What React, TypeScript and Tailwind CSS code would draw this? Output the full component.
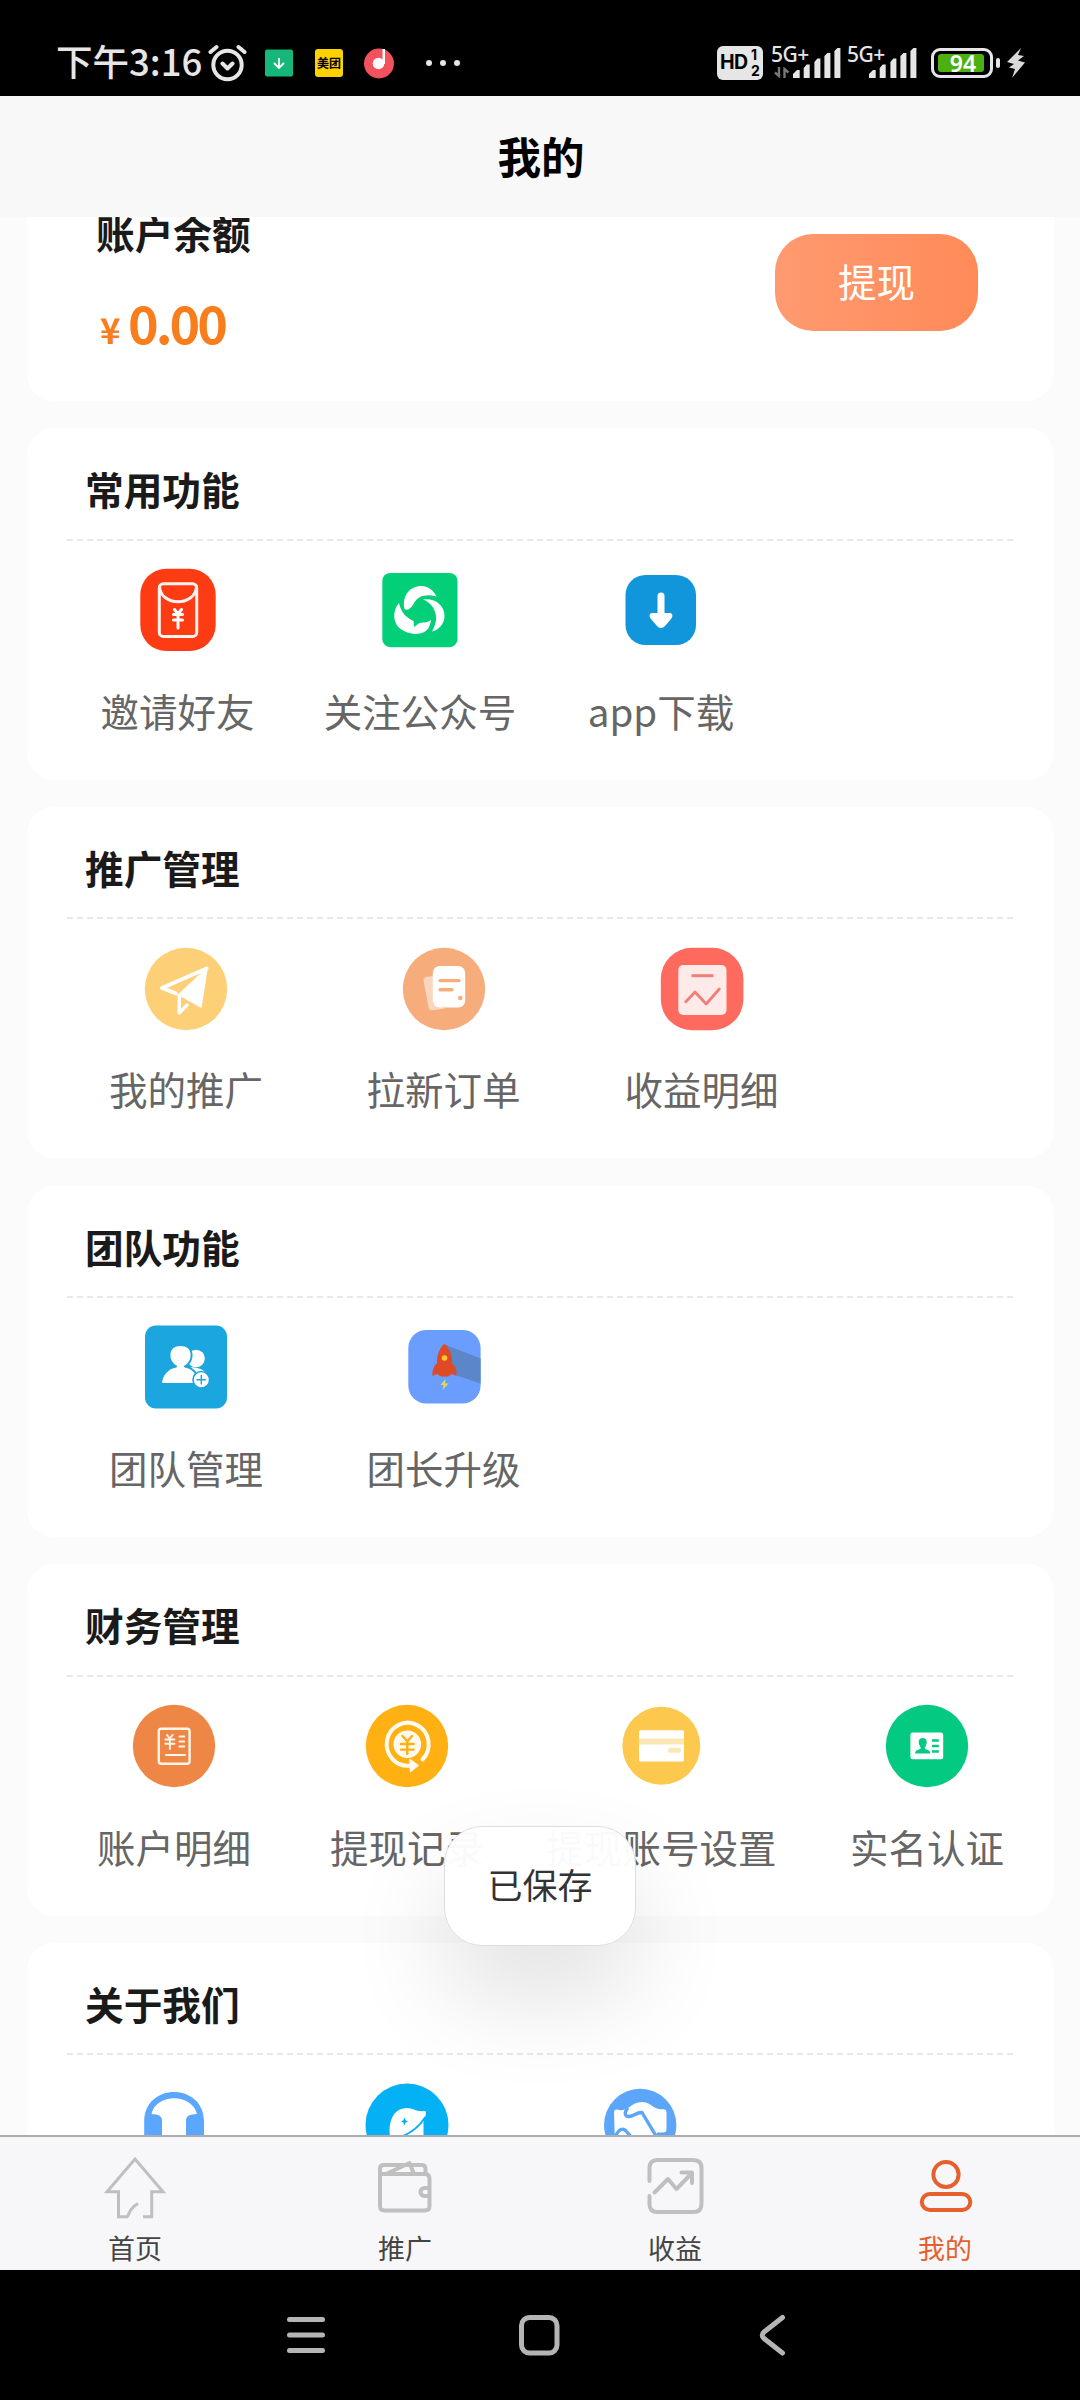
import type { ReactNode } from 'react';

interface MenuItem {
  label: string;
  icon: ReactNode;
  width: string;
}

interface Section {
  title: string;
  items: MenuItem[];
}

function Icon({ children }: { children: ReactNode }) {
  return (
    <svg className="h-[84px] w-[84px] shrink-0" viewBox="0 0 84 84" fill="none" strokeLinecap="round" strokeLinejoin="round">
      {children}
    </svg>
  );
}

const inviteIcon = (
  <Icon>
    <rect x="4.3" y="0.7" width="75.4" height="82.4" rx="26" fill="#fe3c14" />
    <rect x="23.3" y="15.8" width="37.4" height="52.6" rx="4" stroke="#fff3ef" strokeWidth="3" />
    <path d="M23.5 18C24 39 60 39 60.5 18" stroke="#fff3ef" strokeWidth="3" />
    <path d="M38.5 41.5L42 46L45.5 41.5M37.5 46.5h9M37.5 52h9M42 46v14" stroke="#fff" strokeWidth="3" />
  </Icon>
);

const followIcon = (
  <Icon>
    <rect x="4.3" y="5" width="75.2" height="74.2" rx="8" fill="#03cf79" />
    <g fill="#fff">
      <path d="M26.5 41C23.5 27 33 18 43 18C50 18.2 55.5 22 58.5 28.5C48 25.5 40 28 36 35C33.5 40 30 43 26.5 41Z" />
      <path d="M45 31.5C58 30 66.5 38 66.5 48C66.5 56 60 62.5 54 63.5C57 58 58.7 53 58 48C57 40 52 34 45 31.5Z" />
      <path d="M21 35C14 43 15 55 22 60.5C31 68 47 68 51 59C52 56.5 53 54 53 52C49 55.5 44 54 41 55.3L36 59L35.5 53C29 50 23 45 21 35Z" />
    </g>
  </Icon>
);

const downloadIcon = (
  <Icon>
    <rect x="6.5" y="7" width="70.5" height="70" rx="20" fill="#1296db" />
    <path d="M42 28v20" stroke="#fff" strokeWidth="7" />
    <path d="M33 45h18c3 0 3 4 1 6l-6 7c-2.5 2.5-5.5 2.5-8 0l-6-7c-2-2-2-6 1-6z" fill="#fff" />
  </Icon>
);

const promoteIcon = (
  <Icon>
    <circle cx="42" cy="42" r="41.2" fill="#fdd077" />
    <path d="M32 46.5L18 41L62.5 21.5" stroke="#fff" strokeWidth="4" />
    <path d="M63 21L57 60L35 47.5Z" fill="#fff" stroke="#fff" strokeWidth="1.5" />
    <path d="M35.2 48.5V66L43 58" stroke="#fff" strokeWidth="3.4" />
  </Icon>
);

const orderIcon = (
  <Icon>
    <circle cx="42" cy="42" r="41.2" fill="#f7ac7c" />
    <path d="M31 29L24 30Q21 31 21.6 34L26.5 60Q27 63.5 30 63.3L43 61.5L31 57Z" fill="#fff" opacity="0.5" />
    <rect x="30.8" y="19" width="32.4" height="41.5" rx="7" fill="#fff" />
    <path d="M38 33.6h19M38 42.8h12" stroke="#f7ac7c" strokeWidth="3.4" />
    <circle cx="58.3" cy="51" r="2.3" fill="#f7ac7c" />
  </Icon>
);

const incomeIcon = (
  <Icon>
    <rect x="0.8" y="0.8" width="82.6" height="82.4" rx="31" fill="#fe6b5e" />
    <rect x="18.3" y="18" width="48.2" height="50" rx="5" fill="#feeae9" />
    <path d="M31.5 28.7h22" stroke="#f07f78" strokeWidth="3" strokeLinecap="butt" />
    <path d="M25.8 54.8L35 45L46.2 57L59.3 42" stroke="#f07f78" strokeWidth="2.8" />
  </Icon>
);

const teamIcon = (
  <Icon>
    <rect x="1" y="0.5" width="82" height="83" rx="11" fill="#1ba6df" />
    <circle cx="52" cy="33.5" r="8.8" fill="#fff" />
    <path d="M47 42Q62 43 63.5 52H50Z" fill="#fff" />
    <path d="M17 59C17.5 49 24 43 32 41.5C23 37 22 20 36.5 20C51 20 50 37 41 41.5C49 43 54 48 56 59Z" fill="#fff" stroke="#1ba6df" strokeWidth="2" />
    <circle cx="57.3" cy="54.8" r="8.3" fill="#fff" stroke="#1ba6df" strokeWidth="1.6" />
    <path d="M53 54.8h8.6M57.3 50.5v8.6" stroke="#1ba6df" strokeWidth="1.4" />
  </Icon>
);

const rocketIcon = (
  <Icon>
    <rect x="6.3" y="5" width="72.3" height="73.5" rx="18" fill="#6b9dff" />
    <path d="M44 20L78.6 33.5V58.5L53 50Z" fill="#5b87c9" />
    <path d="M42.5 19C47 22 50.3 30 50 38C53 41 55 45 54.5 51L50 49L46 51.5H39L35 49L30.5 51C30 45 32 41 35 38C34.7 30 38 22 42.5 19Z" fill="#df4a26" />
    <circle cx="42.5" cy="33" r="2.8" fill="#fdc62f" />
    <path d="M43.5 54L38.5 60H41.5L40.5 65L46.5 58.5H43Z" fill="#dddc55" />
  </Icon>
);

const accountIcon = (
  <Icon>
    <circle cx="42" cy="42" r="41.2" fill="#ee8746" />
    <rect x="26.8" y="24.8" width="30.8" height="35" rx="2.5" stroke="#fff6e8" strokeWidth="2.4" />
    <path d="M35 31l2.8 3.5L40.6 31M33.4 35.5h9M33.4 39.800h9M37.9 35v10M47.5 32.5h4.7M47.5 37.5h4.7M47.5 42.5h4.7M34 51h19" stroke="#fff6e8" strokeWidth="2" />
  </Icon>
);

const recordIcon = (
  <Icon>
    <circle cx="42" cy="42" r="41.2" fill="#ffb012" />
    <path d="M57.5 55.5A21 21.5 0 1 0 46 61.5" stroke="#fffaf0" strokeWidth="4" />
    <path d="M45 55.5L53 61.5L45.5 67.5Z" fill="#fffaf0" stroke="#fffaf0" strokeWidth="1.5" />
    <circle cx="42.3" cy="40.3" r="13.8" fill="#fffaf0" />
    <path d="M37.5 32L42.3 37.5L47 32M36 40h12.6M36 45.6h12.6M42.3 38v12" stroke="#ffb012" strokeWidth="2.4" />
  </Icon>
);

const cardIcon = (
  <Icon>
    <circle cx="42.3" cy="41.8" r="39" fill="#fcc84e" />
    <rect x="20" y="26.2" width="45" height="31.3" rx="1.5" fill="#fff" />
    <path d="M20 34.5h45v6H20z" fill="#fbe6b5" />
    <rect x="49" y="43.8" width="13" height="5" rx="2.5" fill="#fbe6b5" />
  </Icon>
);

const verifyIcon = (
  <Icon>
    <circle cx="42" cy="42" r="41.2" fill="#03c981" />
    <rect x="25.4" y="28.5" width="32.8" height="26.8" rx="2.5" fill="#fff" />
    <path d="M37.7 34C41.5 34 42.2 37 41.5 40Q40.5 43 39.5 44Q40 45 44 46.5Q45.5 47.5 45.3 49.5H30Q30 47.5 31.5 46.5Q35.5 45 36 44Q35 43 34 40C33.3 37 34 34 37.7 34Z" fill="#03c981" />
    <path d="M47 36.5h6.8M47 42h6.8M47 47.5h6.8" stroke="#03c981" strokeWidth="2.7" strokeLinecap="butt" />
  </Icon>
);

const serviceIcon = (
  <Icon>
    <path d="M12.2 45V38.5C12.2 -1 72 -1 72 38.5V60H54V37Q54 31 65 31C60 10 24 10 19.5 31Q30 31 30 37V60H12.2Z" fill="#5ba6fe" />
  </Icon>
);

const aboutIcon = (
  <Icon>
    <circle cx="42" cy="42" r="41.5" fill="#04b1f4" />
    <path d="M24.8 52C23 35 31 25 41.5 25C49 25 50 29 60.5 28Q62 32 58.5 37V60H27Z" fill="#fff" />
    <path d="M60 34.5Q52 47 38 53" stroke="#04b1f4" strokeWidth="1.8" />
    <path d="M39.5 34.5L40.7 37.2L43 38.4L40.7 39.6L39.5 42.4L38.3 39.6L36 38.4L38.3 37.2Z" fill="#04b1f4" />
  </Icon>
);

const cooperateIcon = (
  <Icon>
    <circle cx="42.2" cy="42" r="36.2" fill="#5ba6f9" />
    <path d="M16 29Q16 26 19 26.5C24 28 26 27 30 25C38 18 46 17 53 22C58 26 62 26.5 66 26.3Q68.5 26.5 68.5 29V46Q68.5 49.5 65 49.5H59V62H17Z" fill="#fff" />
    <path d="M29 26Q25 32 30 33.5C36 34 38 29 44 29.5L57.5 52M18 52Q23 43 28 48L35 56" stroke="#5ba6f9" strokeWidth="3.4" />
  </Icon>
);

const sections: Section[] = [
  {
    title: '常用功能',
    items: [
      { label: '邀请好友', icon: inviteIcon, width: 'w-[221px]' },
      { label: '关注公众号', icon: followIcon, width: 'w-[264px]' },
      { label: 'app下载', icon: downloadIcon, width: 'w-[218px]' },
    ],
  },
  {
    title: '推广管理',
    items: [
      { label: '我的推广', icon: promoteIcon, width: 'w-[238px]' },
      { label: '拉新订单', icon: orderIcon, width: 'w-[277px]' },
      { label: '收益明细', icon: incomeIcon, width: 'w-[239px]' },
    ],
  },
  {
    title: '团队功能',
    items: [
      { label: '团队管理', icon: teamIcon, width: 'w-[238px]' },
      { label: '团长升级', icon: rocketIcon, width: 'w-[277px]' },
    ],
  },
  {
    title: '财务管理',
    items: [
      { label: '账户明细', icon: accountIcon, width: 'w-[214px]' },
      { label: '提现记录', icon: recordIcon, width: 'w-[252px]' },
      { label: '提现账号设置', icon: cardIcon, width: 'w-[256px]' },
      { label: '实名认证', icon: verifyIcon, width: 'w-[276px]' },
    ],
  },
  {
    title: '关于我们',
    items: [
      { label: '', icon: serviceIcon, width: 'w-[214px]' },
      { label: '', icon: aboutIcon, width: 'w-[252px]' },
      { label: '', icon: cooperateIcon, width: 'w-[214px]' },
    ],
  },
];

function Signal() {
  return (
    <svg className="h-[30px] w-[48px] shrink-0" viewBox="0 0 48 30" fill="#e6e6e6">
      <path d="M0 30v-4l4-4h2.700v8zM10.700 30V20l3-3.500h3V30zM21.400 30V14l3-3.500h3V30zM31.400 30V8l3-3h3v25zM41.400 30V3l3-3h3v30z" />
    </svg>
  );
}

function NetworkLabel({ active = false }: { active?: boolean }) {
  return (
    <span className={`${active ? 'ml-[8px]' : 'ml-[6px]'} flex h-[34px] w-[22px] shrink-0 flex-col font-['Noto_Sans',sans-serif] text-[21px] leading-[16px] font-medium tracking-[-0.5px]`}>
      <span>5G+</span>
      {active && (
        <svg className="mt-[5px] ml-[3px] h-[11px] w-4 shrink-0" viewBox="0 0 16 11" fill="none" stroke="#777" strokeWidth="2.4">
          <path d="M5 0v9L1 5.5M10.5 11V2l4 3.5" />
        </svg>
      )}
    </span>
  );
}

function StatusBar() {
  return (
    <div className="flex h-24 shrink-0 items-center bg-black pt-[30px] pl-[56px] text-[#e6e6e6]">
      <span className="mt-[-4px] w-[152px] shrink-0 text-[36.5px] leading-[60px] font-medium whitespace-nowrap">下午3:16</span>
      <svg className="h-[38px] w-[40px] shrink-0" viewBox="0 0 40 38" fill="none" stroke="#e6e6e6" strokeWidth="4" strokeLinecap="round">
        <circle cx="19.5" cy="21" r="14.2" />
        <path d="M14.5 19.5l5 5 5-5M2.5 8L8.5 3M36.5 8L30.5 3" strokeLinejoin="round" />
      </svg>
      <svg className="ml-[17px] h-7 w-7 shrink-0" viewBox="0 0 28 28" fill="none">
        <rect width="28" height="27" y="0.5" rx="2" fill="#15b879" />
        <path d="M14 9v9.5M9 14l5 5 5-5" stroke="#fff" strokeWidth="1.8" />
      </svg>
      <span className="ml-[22px] flex h-7 w-7 shrink-0 items-center justify-center rounded-[3px] bg-[#fed100] text-[12px] font-bold whitespace-nowrap text-black">美团</span>
      <svg className="ml-[21px] h-[31px] w-[30px] shrink-0" viewBox="0 0 30 31">
        <circle cx="15" cy="15.5" r="15" fill="#f1525d" />
        <circle cx="14.5" cy="15.5" r="5.8" fill="#fff" />
        <path d="M18.5 1h2.5v15h-2.5z" fill="#fff" />
      </svg>
      <span className="ml-8 flex gap-2">
        <i className="h-1.5 w-1.5 rounded-full bg-[#e6e6e6]" />
        <i className="h-1.5 w-1.5 rounded-full bg-[#e6e6e6]" />
        <i className="h-1.5 w-1.5 rounded-full bg-[#e6e6e6]" />
      </span>
      <span className="ml-[257px] flex h-[34px] w-[46px] shrink-0 items-center rounded-md bg-[#e6e6e6] pl-[3px] font-['Inter',sans-serif] text-black">
        <b className="w-[29px] text-[19.5px] tracking-[-0.5px]">HD</b>
        <span className="flex flex-col pl-[2px] text-[14px] leading-[16px] font-bold">
          <span>1</span>
          <span>2</span>
        </span>
      </span>
      <NetworkLabel active />
      <Signal />
      <NetworkLabel />
      <Signal />
      <span className="ml-[14px] flex h-[30px] w-[62px] shrink-0 items-center rounded-[9px] border-[3px] border-[#e6e6e6] pl-1">
        <span className="flex h-[18px] w-[46px] items-center justify-center rounded-[3px] bg-[#4cb010] pl-1 font-['Noto_Sans',sans-serif] text-[23px] leading-none font-semibold text-white">94</span>
      </span>
      <i className="ml-[3px] h-[10px] w-1 shrink-0 rounded-full bg-[#e6e6e6]" />
      <svg className="ml-[7px] h-[30px] w-[18px] shrink-0" viewBox="0 0 18 30" fill="#d9d9d9">
        <path d="M14 0L0 14l7 2-5 3.500 6 1.500-3 9L18 14.500l-7-2 6-4.500-6-1z" />
      </svg>
    </div>
  );
}

function BalanceCard() {
  return (
    <div className="flex h-[184px] shrink-0 justify-between rounded-b-[27px] bg-white pr-[76px] pl-[69px]">
      <div>
        <h2 className="mt-[-15px] text-[38.7px] leading-[60px] font-bold text-[#1a1a1a]">账户余额</h2>
        <p className="mt-[25px] flex items-baseline leading-[70px] font-bold text-[#f87d1c]">
          <span className="w-[32px] pl-[4px] text-[35px]">¥</span>
          <span className="text-[52px] tracking-[-3px]">0.00</span>
        </p>
      </div>
      <button className="mt-[17px] h-[97px] w-[203px] rounded-[38px] bg-linear-to-r from-[#ff9a70] to-[#ff8a58] pb-[3px] text-[38.5px] text-white">
        提现
      </button>
    </div>
  );
}

function SectionCard({ title, items }: Section) {
  return (
    <section className="h-[351.4px] shrink-0 rounded-[27px] bg-white pr-[41px] pl-10">
      <h2 className="h-[112.3px] border-b-2 border-dashed border-[#e8e8e8] pt-[30px] pl-[18px] text-[38.7px] leading-[60px] font-bold text-[#1a1a1a]">
        {title}
      </h2>
      <div className="flex pt-[27.5px]">
        {items.map((item, i) => (
          <div key={i} className={`flex shrink-0 flex-col items-center ${item.width}`}>
            {item.icon}
            <span className="mt-[27.5px] text-[38.5px] leading-[60px] whitespace-nowrap text-[#666]">{item.label}</span>
          </div>
        ))}
      </div>
    </section>
  );
}

const tabs = [
  {
    label: '首页',
    icon: <path d="M27 64.700H17.500V39.700H6L34 7L62 39.700H50.700V64.700H42M26.500 65Q29 56 37 51.500" strokeWidth="3" strokeLinecap="butt" strokeLinejoin="miter" />,
  },
  {
    label: '推广',
    icon: (
      <path d="M9 17V54Q9 58.500 13.500 58.500H54Q58.500 58.500 58.500 54V27Q58.500 22 54 22H9V16.500Q9 13 13 13H51Q54.500 13 54.500 17V22M15 22L38.500 11L43 22M58 36H54C48 36 48 44 54 44H58" />
    ),
  },
  {
    label: '收益',
    icon: (
      <path d="M8.500 29V16Q8.500 8 16.500 8H52.500Q60.500 8 60.500 16V52Q60.500 60 52.500 60H16.500Q8.500 60 8.500 52V44M13.500 40.500L27 27L35.500 37L51 21M40.500 20.500H51V31" />
    ),
  },
  {
    label: '我的',
    active: true,
    icon: (
      <>
        <circle cx="35" cy="22.5" r="12.6" />
        <rect x="10.8" y="42" width="48.500" height="16" rx="8" />
      </>
    ),
  },
];

function TabBar() {
  return (
    <nav className="grid h-[135px] shrink-0 grid-cols-4 border-t-2 border-[#adadb0] bg-[#f7f7f9]">
      {tabs.map((tab) => (
        <div key={tab.label} className={`flex flex-col items-center pt-[15px] ${tab.active ? 'text-[#e5602c]' : 'text-[#444]'}`}>
          <svg
            className="h-[68px] w-[68px]"
            viewBox="0 0 68 68"
            fill="none"
            stroke={tab.active ? '#e5602c' : '#bfbfbf'}
            strokeWidth="4"
            strokeLinecap="round"
            strokeLinejoin="round"
          >
            {tab.icon}
          </svg>
          <span className="mt-[8px] text-[27px] leading-[40px]">{tab.label}</span>
        </div>
      ))}
    </nav>
  );
}

function SystemNav() {
  return (
    <div className="flex h-[130px] shrink-0 items-center bg-black pl-[285px]">
      <svg className="h-[42px] w-[504px]" viewBox="0 0 504 42" fill="none" stroke="#b5b5b5" strokeWidth="5" strokeLinecap="round" strokeLinejoin="round">
        <path d="M4.500 5.500h33M4.500 21h33M4.500 36.500h33" />
        <rect x="236.500" y="3.500" width="35.500" height="35.500" rx="8" />
        <path d="M497.500 3.500L479 18Q475.500 21 479 24.500L497.500 39" />
      </svg>
    </div>
  );
}

export default function App() {
  return (
    <div className="relative flex h-[2400px] w-[1080px] flex-col overflow-hidden bg-[#fbfbfb] font-['Noto_Sans_CJK_SC',sans-serif]">
      <StatusBar />
      <header className="flex h-[121px] shrink-0 items-center justify-center bg-[#f8f8f8] pb-[2px] pl-[2px] text-[43.5px] font-bold text-black">
        我的
      </header>
      <main className="flex min-h-0 flex-1 flex-col gap-[27.3px] overflow-hidden pr-[26px] pl-[27px]">
        <BalanceCard />
        {sections.map((section) => (
          <SectionCard key={section.title} {...section} />
        ))}
      </main>
      <TabBar />
      <SystemNav />

      {/* toast */}
      <div className="absolute top-[1826px] left-[444px] flex h-[120px] w-[192px] items-center justify-center rounded-[38px] border border-[#dedede] bg-white/97 pb-[4px] text-[35px] text-[#333] shadow-[0_50px_100px_rgba(0,0,0,0.12)]">
        已保存
      </div>
    </div>
  );
}
